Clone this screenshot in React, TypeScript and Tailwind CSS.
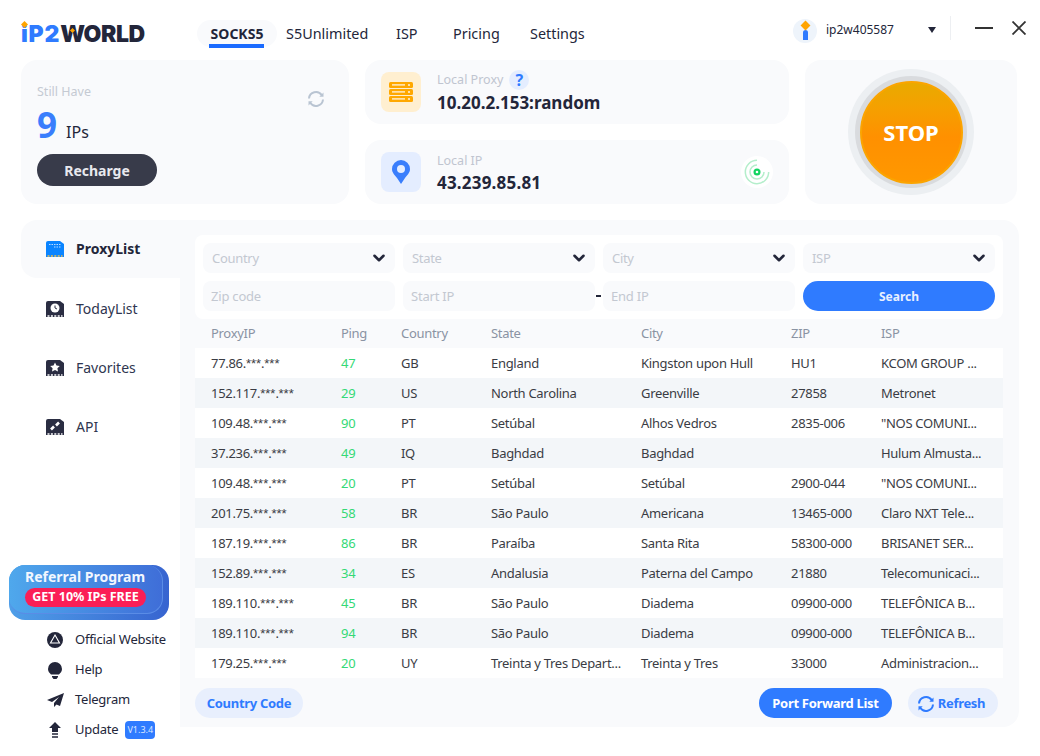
import { ChevronDown } from 'lucide-react';

const FONT = "font-['Noto_Sans','Noto_Sans_CJK_SC',sans-serif]";

const rows = [
  ['77.86.***.***', '47', 'GB', 'England', 'Kingston upon Hull', 'HU1', 'KCOM GROUP ...'],
  ['152.117.***.***', '29', 'US', 'North Carolina', 'Greenville', '27858', 'Metronet'],
  ['109.48.***.***', '90', 'PT', 'Setúbal', 'Alhos Vedros', '2835-006', '"NOS COMUNI...'],
  ['37.236.***.***', '49', 'IQ', 'Baghdad', 'Baghdad', '', 'Hulum Almusta...'],
  ['109.48.***.***', '20', 'PT', 'Setúbal', 'Setúbal', '2900-044', '"NOS COMUNI...'],
  ['201.75.***.***', '58', 'BR', 'São Paulo', 'Americana', '13465-000', 'Claro NXT Tele...'],
  ['187.19.***.***', '86', 'BR', 'Paraíba', 'Santa Rita', '58300-000', 'BRISANET SER...'],
  ['152.89.***.***', '34', 'ES', 'Andalusia', 'Paterna del Campo', '21880', 'Telecomunicaci...'],
  ['189.110.***.***', '45', 'BR', 'São Paulo', 'Diadema', '09900-000', 'TELEFÔNICA B...'],
  ['189.110.***.***', '94', 'BR', 'São Paulo', 'Diadema', '09900-000', 'TELEFÔNICA B...'],
  ['179.25.***.***', '20', 'UY', 'Treinta y Tres Depart...', 'Treinta y Tres', '33000', 'Administracion...'],
];

const COLS = 'grid grid-cols-[130px_60px_90px_150px_150px_90px_1fr] pl-4 pt-px tracking-[-0.3px]';

function RefreshIcon({ className }: { className: string }) {
  return (
    <svg viewBox="0 0 18 18" className={className} fill="none" stroke="currentColor" strokeWidth="2">
      <path d="M2 8.500A7 7 0 0 1 14.800 5.200" />
      <path d="M16 9.500A7 7 0 0 1 3.200 12.800" />
      <path d="M16.500 2.500v4.200h-4.200z" fill="currentColor" stroke="none" />
      <path d="M1.500 15.500v-4.200h4.200z" fill="currentColor" stroke="none" />
    </svg>
  );
}

function ChipIcon({ color, pins = '#fff', children }: { color: string; pins?: string; children?: React.ReactNode }) {
  return (
    <svg viewBox="0 0 18 16" className="w-[18px] h-4 shrink-0">
      <path d="M2 0h12l4 3v11H0V2a2 2 0 0 1 2-2z" fill={color} />
      <rect x="0" y="13.500" width="18" height="2.500" fill={color} />
      <path d="M1.500 15h15" stroke={pins} strokeWidth="1.400" strokeDasharray="2 1.400" />
      {children}
    </svg>
  );
}

function Select({ label }: { label: string }) {
  return (
    <div className="h-[30px] rounded-lg bg-[#f9fafc] flex items-center justify-between pl-[9px] pr-[7px]">
      <span className="pt-px text-[13px] tracking-[-0.3px] text-[#c3c8d1]">{label}</span>
      <ChevronDown className="w-[18px] h-[18px] text-[#23263a]" strokeWidth={3.4} />
    </div>
  );
}

function Field({ label }: { label: string }) {
  return (
    <div className="h-[30px] rounded-lg bg-[#f9fafc] flex items-center pl-2">
      <span className="pt-px text-[13px] tracking-[-0.2px] text-[#c3c8d1]">{label}</span>
    </div>
  );
}

function NavItem({ label, active, icon }: { label: string; active?: boolean; icon: React.ReactNode }) {
  return (
    <div
      className={
        active
          ? 'h-[58px] mb-px pb-px flex items-center gap-[12px] pl-[25px] bg-[#f9fafc] rounded-l-2xl text-[14px] font-bold text-[#23263a]'
          : 'h-[59px] flex items-center gap-[12px] pl-[25px] text-[14px] text-[#2f3650]'
      }
    >
      {icon}
      {label}
    </div>
  );
}

function LinkRow({ icon, children }: { icon: React.ReactNode; children: React.ReactNode }) {
  return (
    <div className="h-[30px] flex items-center pl-[25px] gap-[11px] text-[13px] tracking-[-0.25px] text-[#23263a]">
      <span className="w-[18px] flex justify-center">{icon}</span>
      {children}
    </div>
  );
}

// the masked octets use narrower asterisks than Noto Sans has
function Masked({ text }: { text: string }) {
  return (
    <>
      {text.split(/(\*+)/).map((part, i) =>
        part.startsWith('*') ? (
          <span key={i} className="font-['Liberation_Sans',sans-serif] tracking-normal">{part}</span>
        ) : (
          <span key={i}>{part}</span>
        ),
      )}
    </>
  );
}

export default function App() {
  return (
    <div className={`w-[1040px] h-[756px] bg-white overflow-hidden ${FONT}`}>
      <header className="h-[60px] flex items-center pl-[21px] pr-[14px]">
        <div className="relative w-[176px] flex items-center h-full pt-[9px]">
          <svg viewBox="0 0 8 8" className="absolute left-0 top-[21px] w-[7px] h-[7px]">
            <path d="M4 0l4 4-4 4-4-4z" fill="#ffa400" />
          </svg>
          <svg viewBox="0 0 8 8" className="absolute left-[49px] top-[28px] w-[5px] h-[5px]">
            <path d="M4 0l4 4-4 4-4-4z" fill="#ffa400" />
          </svg>
          <span className="text-[23px] leading-none font-black font-['Inter',sans-serif] tracking-[0.8px] text-[#2f7bff]">iP2</span>
          <span className="text-[23px] leading-none font-black font-['Inter',sans-serif] tracking-[-0.4px] text-[#23263a]">WORLD</span>
        </div>
        <nav className="flex items-center mt-[7px] text-[14.4px] text-[#23263a]">
          <div className="w-[80px] h-[27px] rounded-full bg-[#f9fafc] flex justify-center relative items-center font-bold text-[14px]">
            SOCKS5
            <span className="absolute left-[12px] bottom-[-1px] w-[55px] h-1 bg-[#1a6bff]" />
          </div>
          <span className="ml-[9px] w-[110px]">S5Unlimited</span>
          <span className="w-[57px]">ISP</span>
          <span className="w-[77px]">Pricing</span>
          <span>Settings</span>
        </nav>
        <div className="ml-auto flex items-center">
          <div className="mt-[2px] w-6 h-6 rounded-full bg-[#eef4fb] flex flex-col items-center justify-center gap-px">
            <span className="w-[7px] h-[7px] rotate-45 bg-[#ffa400]" />
            <span className="w-[5px] h-[10px] rounded-t-sm bg-[#2f7bff]" />
          </div>
          <span className="ml-[9px] w-[102px] text-[12px] text-[#23263a]">ip2w405587</span>
          <svg viewBox="0 0 8 6" className="w-2 h-[6px]">
            <path d="M0 0h8L4 6z" fill="#23263a" />
          </svg>
          <span className="ml-[14px] w-px h-6 -mt-1 bg-[#edeff2]" />
          <svg viewBox="0 0 18 2" className="ml-[24px] -mt-1 w-[18px] h-[2px]">
            <rect width="18" height="2" fill="#333" />
          </svg>
          <svg viewBox="0 0 14 14" className="ml-[19px] -mt-1 w-[14px] h-[14px]" fill="none" stroke="#333" strokeWidth="1.800">
            <path d="M0.500 0.500l13 13M13.500 0.500l-13 13" />
          </svg>
        </div>
      </header>

      <section className="h-[144px] ml-[21px] flex gap-4 w-[996px]">
        <div className="w-[328px] rounded-2xl bg-[#f9fafc] pl-4 pt-[23px] relative">
          <div className="text-[12.5px] leading-[18px] text-[#c5cad3]">Still Have</div>
          <div className="flex items-baseline mt-[3px] h-[42px]">
            <span className="text-[35px] font-bold text-[#3a7efc] leading-[42px]">9</span>
            <span className="ml-[9px] text-[16px] text-[#23263a]">IPs</span>
          </div>
          <button className="mt-[8px] w-[120px] h-8 rounded-full bg-[#383b4a] text-[14px] font-bold text-[#e8e9ee]">Recharge</button>
          <RefreshIcon className="absolute right-[24px] top-[30px] w-[18px] h-[18px] text-[#b9c4d2]" />
        </div>

        <div className="w-[424px] flex flex-col gap-4">
          <div className="h-16 rounded-2xl bg-[#f9fafc] flex items-center pl-4">
            <div className="w-10 h-10 rounded-lg bg-[#ffefd0] flex items-center justify-center">
              <svg viewBox="0 0 24 20" className="w-6 h-5">
                {[0, 7, 14].map((y) => (
                  <g key={y}>
                    <rect x="0" y={y} width="24" height="6" rx="1.500" fill="#ffa800" />
                    <rect x="3" y={y + 2.2} width="13" height="1.400" fill="#ffefd0" />
                    <circle cx="20" cy={y + 3} r="1.100" fill="#ffefd0" />
                  </g>
                ))}
              </svg>
            </div>
            <div className="ml-4 pt-px">
              <div className="flex items-center h-5 text-[12.5px] text-[#c0c5d0]">
                Local Proxy
                <span className="ml-[6px] -mt-px w-5 h-5 rounded-full bg-[#e4edff] flex items-center justify-center text-[16px] font-bold text-[#2f7bff]">?</span>
              </div>
              <div className="text-[17px] leading-[24px] font-bold text-[#23263a]">10.20.2.153:random</div>
            </div>
          </div>
          <div className="h-16 rounded-2xl bg-[#f9fafc] flex items-center pl-4 pr-[16px]">
            <div className="w-10 h-10 rounded-lg bg-[#e4edff] flex items-center justify-center">
              <svg viewBox="0 0 18 24" className="w-[18px] h-6">
                <path d="M9 0a9 9 0 0 1 9 9c0 4-3 6-5 9l-4 6-4-6C3 15 0 13 0 9a9 9 0 0 1 9-9z" fill="#3a7efc" />
                <circle cx="9" cy="9" r="4" fill="#e4edff" />
              </svg>
            </div>
            <div className="ml-4 pt-px">
              <div className="h-5 leading-5 text-[12.5px] text-[#c0c5d0]">Local IP</div>
              <div className="text-[17px] leading-[24px] font-bold text-[#23263a] tracking-[0.2px]">43.239.85.81</div>
            </div>
            <div className="ml-auto w-8 h-8 rounded-full bg-white flex items-center justify-center">
              <svg viewBox="0 0 24 24" className="w-7 h-7" fill="none">
                <path d="M12 2a10 10 0 1 0 10 10" stroke="#b4eecb" strokeWidth="1.300" />
                <path d="M12 6a6 6 0 1 0 6 6" stroke="#b4eecb" strokeWidth="1.300" />
                <circle cx="12" cy="12" r="3" fill="#10d45f" />
                <circle cx="12" cy="12" r="1.100" fill="#fff" />
              </svg>
            </div>
          </div>
        </div>

        <div className="w-[212px] rounded-2xl bg-[#f9fafc] flex items-center justify-center">
          <div className="w-[126px] h-[126px] rounded-full bg-[#eceff2] flex items-center justify-center">
            <div className="w-[112px] h-[112px] rounded-full bg-[#d9dbde] flex items-center justify-center">
              <div className="w-[103px] h-[103px] rounded-full border-2 border-[#fba400] bg-[linear-gradient(180deg,#e9aa00_0%,#f5a000_25%,#ff9000_55%,#ff9800_100%)] flex items-center justify-center text-[22px] font-bold text-white">
                STOP
              </div>
            </div>
          </div>
        </div>
      </section>

      <section className="mt-4 ml-[21px] w-[998px] flex items-start">
        <aside className="w-[159px] h-[525px] flex flex-col justify-between shrink-0">
          <div>
            <NavItem
              active
              label="ProxyList"
              icon={
                <ChipIcon color="#0a84ff" pins="#f5c04a">
                  <path d="M3 3.500h12M8 6h7" stroke="#bcdcff" strokeWidth="1" strokeDasharray="1.500 1" />
                </ChipIcon>
              }
            />
            <NavItem
              label="TodayList"
              icon={
                <ChipIcon color="#2a2d42">
                  <circle cx="9" cy="7" r="4.500" fill="#fff" />
                  <path d="M9 4.500V7l2 1" stroke="#2a2d42" fill="none" />
                </ChipIcon>
              }
            />
            <NavItem
              label="Favorites"
              icon={
                <ChipIcon color="#2a2d42">
                  <path d="M9 2.500l1.500 3 3.300.4-2.400 2.300.6 3.300L9 10l-3 1.500.6-3.300-2.400-2.300 3.300-.4z" fill="#fff" />
                </ChipIcon>
              }
            />
            <NavItem
              label="API"
              icon={
                <ChipIcon color="#2a2d42">
                  <path d="M5 10.500l3-3M10 6.500l3-3" stroke="#fff" strokeWidth="2.600" />
                </ChipIcon>
              }
            />
          </div>
          <div>
            <div className="-ml-3 w-[160px] h-[55px] rounded-[16px] bg-[linear-gradient(90deg,#4f9fe8,#3764d0)]">
              <div className="w-[154px] h-[49px] rounded-[16px] border-r border-b border-[#5a8ce6] bg-[linear-gradient(90deg,#4fa8ec,#3f6ed8)] pl-[16px] pt-[3px]">
                <div className="text-[14px] leading-[18px] font-bold text-[#f2f7ff]">Referral Program</div>
                <div className="mt-[2px] w-[121px] h-[19px] rounded-full bg-[#fb1e56] flex items-center justify-center text-[12.5px] font-bold text-white">
                  GET 10% IPs FREE
                </div>
              </div>
            </div>
            <div className="mt-[5px]">
              <LinkRow
                icon={
                  <svg viewBox="0 0 16 16" className="w-4 h-4">
                    <circle cx="8" cy="8" r="8" fill="#23263a" />
                    <path d="M8 3l4.500 8h-9z" fill="none" stroke="#fff" strokeWidth="1.100" />
                  </svg>
                }
              >
                Official Website
              </LinkRow>
              <LinkRow
                icon={
                  <svg viewBox="0 0 14 17" className="w-[14px] h-[17px]">
                    <path d="M7 0a7 7 0 0 1 7 7c0 2.600-1.600 4-3 5.500H3C1.600 11 0 9.600 0 7a7 7 0 0 1 7-7z" fill="#23263a" />
                    <path d="M4 14h6v1l-1.500 2h-3L4 15z" fill="#23263a" />
                  </svg>
                }
              >
                Help
              </LinkRow>
              <LinkRow
                icon={
                  <svg viewBox="0 0 17 14" className="w-[17px] h-[14px]">
                    <path d="M17 0L0 7l5 2 7-5-5 6v4l2.500-2.500L13 13z" fill="#23263a" />
                  </svg>
                }
              >
                Telegram
              </LinkRow>
              <LinkRow
                icon={
                  <svg viewBox="0 0 12 16" className="w-3 h-4">
                    <path d="M6 0l6 6H9v4H3V6H0z" fill="#23263a" />
                    <path d="M3 12h6M3 15h6" stroke="#23263a" strokeWidth="1.400" />
                  </svg>
                }
              >
                <span>Update</span>
                <span className="-ml-1 w-[30px] h-[18px] rounded bg-[#2f7bff] text-[9px] leading-[18px] text-center tracking-normal text-[#dce8ff]">V1.3.4</span>
              </LinkRow>
            </div>
          </div>
        </aside>

        <div className="w-[839px] h-[507px] bg-[#f9fafc] rounded-r-2xl pl-[15px] pr-4 pt-[15px]">
          <div className="rounded-lg bg-white p-2 grid grid-cols-4 gap-x-2 gap-y-2">
            <Select label="Country" />
            <Select label="State" />
            <Select label="City" />
            <Select label="ISP" />
            <Field label="Zip code" />
            <div className="relative">
              <Field label="Start IP" />
              <span className="absolute right-[-6px] top-[14px] w-[5px] h-0.5 bg-[#23263a]" />
            </div>
            <Field label="End IP" />
            <button className="h-[30px] pt-px rounded-full bg-[#2f7bff] text-[12px] font-bold text-[#e8f0ff]">Search</button>
          </div>

          <div className={`${COLS} h-[29px] items-center text-[13px] text-[#8a93a3]`}>
            {['ProxyIP', 'Ping', 'Country', 'State', 'City', 'ZIP', 'ISP'].map((h) => (
              <span key={h}>{h}</span>
            ))}
          </div>

          <div>
            {rows.map((row, i) => (
              <div key={i} className={`${COLS} h-[30px] items-center text-[13px] text-[#3a3c44] ${i % 2 ? 'bg-[#f3f6f9]' : 'bg-white'}`}>
                {row.map((cell, j) => (
                  <span key={j} className={j === 1 ? 'text-[#34d976]' : 'whitespace-nowrap'}>
                    {j === 0 ? <Masked text={cell} /> : cell}
                  </span>
                ))}
              </div>
            ))}
          </div>

          <div className="mt-[10px] flex items-center text-[13px] font-bold tracking-[-0.3px]">
            <button className="w-[108px] h-[30px] pt-px rounded-full bg-[#e8effd] text-[#2f7bff]">Country Code</button>
            <button className="ml-auto w-[133px] h-[30px] pt-px rounded-full bg-[#2f7bff] text-white">Port Forward List</button>
            <button className="ml-4 mr-[5px] w-[90px] h-[30px] pt-px rounded-full bg-[#e8effd] text-[#2f7bff] flex items-center justify-center gap-[3px] pr-1">
              <RefreshIcon className="w-[18px] h-[18px]" />
              Refresh
            </button>
          </div>
        </div>
      </section>
    </div>
  );
}
